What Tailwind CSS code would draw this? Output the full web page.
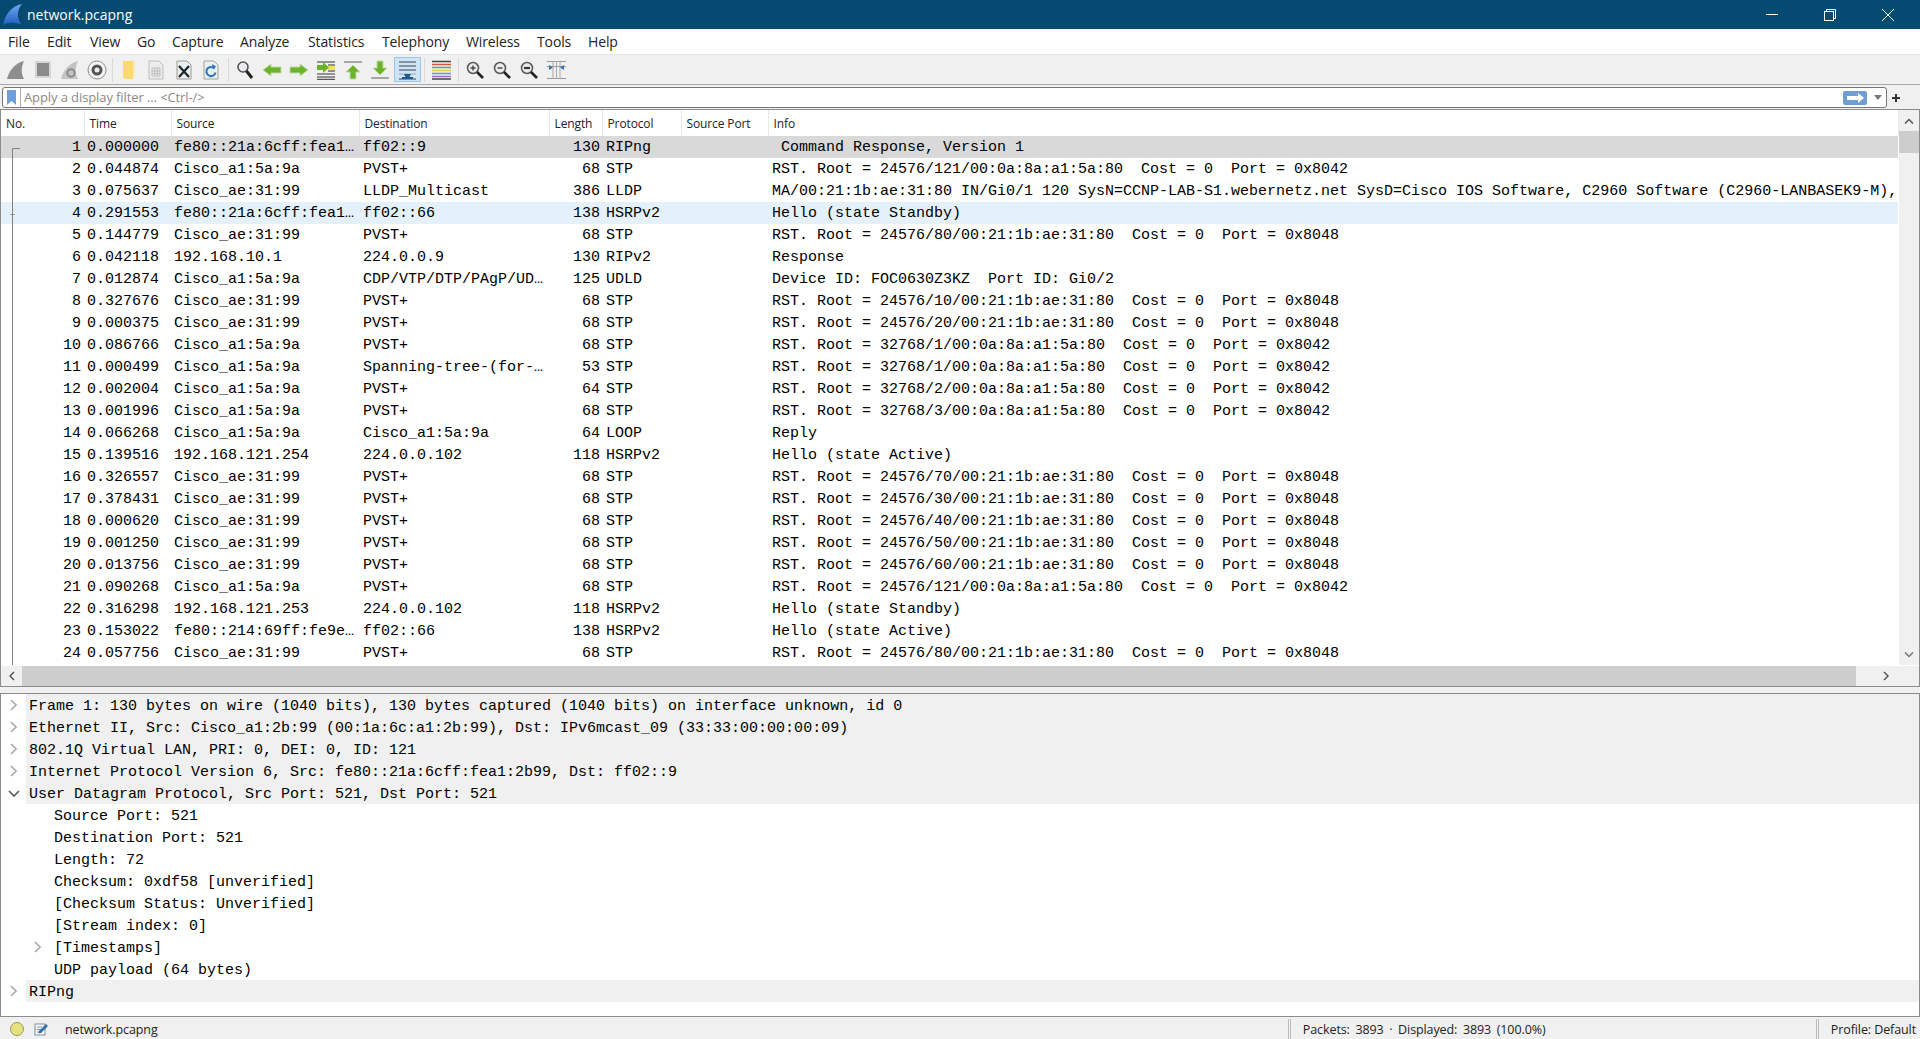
<!DOCTYPE html>
<html>
<head>
<meta charset="utf-8">
<script src="https://cdn.jsdelivr.net/npm/@tailwindcss/browser@4"></script>
<title>network.pcapng</title>
</head>
<body class="w-[1920px] h-[1039px] overflow-hidden flex flex-col bg-white text-[#1a1a1a] font-['Open_Sans','Noto_Sans',sans-serif]">

<!-- title bar -->
<div class="h-[29px] shrink-0 bg-[#054a70] flex items-center text-white">
  <svg class="ml-[2px] w-[21px] h-[23px]" viewBox="0 0 21 23"><defs><linearGradient id="fin" x1="0" y1="0" x2="0" y2="1"><stop offset="0" stop-color="#6fa8ee"/><stop offset="1" stop-color="#1f5fc0"/></linearGradient></defs><path d="M1 22C3 12 9 3 20 1C15 7 14 15 20 22C13 19 7 19 1 22Z" fill="url(#fin)"/></svg>
  <span class="ml-[4px] text-[14px] leading-none">network.pcapng</span>
  <div class="ml-auto flex items-center h-full">
    <svg class="w-[14px] h-[14px] mr-[44px]" viewBox="0 0 14 14"><path d="M1 6.500H13" stroke="#fff" stroke-width="1"/></svg>
    <svg class="w-[14px] h-[14px] mr-[44px]" viewBox="0 0 14 14" fill="none" stroke="#fff"><rect x="1.500" y="3.500" width="9" height="9"/><path d="M3.500 3.500V1.500H12.500V10.500H10.500"/></svg>
    <svg class="w-[14px] h-[14px] mr-[25px]" viewBox="0 0 14 14" fill="none" stroke="#fff"><path d="M1 1L13 13M13 1L1 13"/></svg>
  </div>
</div>

<!-- menu -->
<div class="h-[26px] shrink-0 bg-white border-b border-[#e6e6e6] flex items-center text-[14px] tracking-[-0.12px] text-[#222] pl-[8px]">
  <span class="w-[39px]">File</span><span class="w-[43px]">Edit</span><span class="w-[47px]">View</span><span class="w-[35px]">Go</span><span class="w-[68px]">Capture</span><span class="w-[68px]">Analyze</span><span class="w-[74px]">Statistics</span><span class="w-[84px]">Telephony</span><span class="w-[71px]">Wireless</span><span class="w-[51px]">Tools</span><span>Help</span>
</div>

<!-- toolbar -->
<div class="h-[30px] shrink-0 bg-[#f0f0f0] border-b border-[#a9a9a9] flex items-center pl-[2px]">
  <span class="w-[27px] h-[24px] flex items-center justify-center"><svg class="w-[20px] h-[20px]" viewBox="0 0 20 20"><path d="M1 19C3 11 9 3 18 1C15 7 15 14 18 19Z" fill="#8e8e8e"/></svg></span>
  <span class="w-[27px] h-[24px] flex items-center justify-center"><svg class="w-[20px] h-[20px]" viewBox="0 0 20 20"><rect x="2" y="1" width="16" height="17" fill="#d5d5d5"/><rect x="4" y="3" width="12" height="13" fill="#8a8a8a"/></svg></span>
  <span class="w-[27px] h-[24px] flex items-center justify-center"><svg class="w-[20px] h-[20px]" viewBox="0 0 20 20"><path d="M1 19C3 11 9 3 18 1C15 7 15 14 18 19Z" fill="#c4c4c4"/><circle cx="11" cy="13" r="3.700" fill="none" stroke="#8a8a8a" stroke-width="2"/></svg></span>
  <span class="w-[27px] h-[24px] flex items-center justify-center"><svg class="w-[20px] h-[20px]" viewBox="0 0 20 20"><circle cx="10" cy="10" r="9" fill="#f4f4f4" stroke="#8f8f8f"/><circle cx="10" cy="10" r="5.500" fill="#555"/><circle cx="10" cy="10" r="2.500" fill="#eee"/></svg></span>
  <span class="w-[5px] h-[24px] flex justify-center"><span class="w-px h-full bg-[#d8d8d8]"></span></span>
  <span class="w-[27.5px] h-[24px] flex items-center justify-center"><svg class="w-[14px] h-[20px]" viewBox="0 0 14 20"><path d="M1 1H11V19H5L1 18Z" fill="#fcd96c"/><path d="M11 1H13V17H11Z" fill="#f3e8bf"/></svg></span>
  <span class="w-[27.5px] h-[24px] flex items-center justify-center"><svg class="w-[18px] h-[20px]" viewBox="0 0 18 20"><path d="M2 1H12L16 5V19H2Z" fill="#ececec" stroke="#bdbdb5"/><path d="M5 8H13V16H5ZM5 11H13M5 13.500H13M8 8V16M10.500 8V16" fill="none" stroke="#bdbdbd"/></svg></span>
  <span class="w-[27.5px] h-[24px] flex items-center justify-center"><svg class="w-[18px] h-[20px]" viewBox="0 0 18 20"><path d="M2 1H12L16 5V19H2Z" fill="#e6f0f8" stroke="#a39c88"/><path d="M4 6L14 17M14 6L4 17" stroke="#222" stroke-width="2.200"/></svg></span>
  <span class="w-[27.5px] h-[24px] flex items-center justify-center"><svg class="w-[18px] h-[20px]" viewBox="0 0 18 20"><path d="M2 1H12L16 5V19H2Z" fill="#e6f0f8" stroke="#a8a290"/><path d="M12.500 8.500A4.600 4.600 0 1 0 13.500 12.500" fill="none" stroke="#2f74b8" stroke-width="2"/><path d="M10 4L14 6.500L11 9.500Z" fill="#2f74b8"/></svg></span>
  <span class="w-[6.5px] h-[24px] flex justify-center"><span class="w-px h-full bg-[#d8d8d8]"></span></span>
  <span class="w-[27px] h-[24px] flex items-center justify-center"><svg class="w-[18px] h-[20px]" viewBox="0 0 18 20"><circle cx="7" cy="7" r="5" fill="#e8eef2" stroke="#555" stroke-width="1.600"/><path d="M10.500 11L16 18" stroke="#222" stroke-width="3"/></svg></span>
  <span class="w-[27px] h-[24px] flex items-center justify-center"><svg class="w-[20px] h-[14px]" viewBox="0 0 20 14"><path d="M1 7L9 1V4H19V10H9V13Z" fill="#6cb32c" stroke="#bcdca0"/></svg></span>
  <span class="w-[27px] h-[24px] flex items-center justify-center"><svg class="w-[20px] h-[14px]" viewBox="0 0 20 14"><path d="M19 7L11 1V4H1V10H11V13Z" fill="#6cb32c" stroke="#bcdca0"/></svg></span>
  <span class="w-[27px] h-[24px] flex items-center justify-center"><svg class="w-[20px] h-[20px]" viewBox="0 0 20 20"><path d="M1 2H19M1 17H19M1 19.300H19M12 5H19M12 8H19M12 11H19M1 14H19" stroke="#333" stroke-width="1"/><rect x="12" y="6" width="7" height="4" fill="#f0e25c"/><path d="M1 5H7V2L13 7.500L7 13V10H1Z" fill="#6cb32c"/></svg></span>
  <span class="w-[27px] h-[24px] flex items-center justify-center"><svg class="w-[20px] h-[20px]" viewBox="0 0 20 20"><rect x="1" y="1" width="18" height="2" fill="#a8a8a8"/><path d="M10 5L17 12H13V19H7V12H3Z" fill="#6cb32c" stroke="#bcdca0"/></svg></span>
  <span class="w-[27px] h-[24px] flex items-center justify-center"><svg class="w-[20px] h-[20px]" viewBox="0 0 20 20"><rect x="1" y="17" width="18" height="2" fill="#a8a8a8"/><path d="M10 15L17 8H13V1H7V8H3Z" fill="#6cb32c" stroke="#bcdca0"/></svg></span>
  <span class="w-[27px] h-[25px] bg-[#cde4f7] border border-[#9bc6ea] flex items-center justify-center"><svg class="w-[19px] h-[20px]" viewBox="0 0 19 20"><path d="M1 2H18M1 6H18M1 10H18" stroke="#444" stroke-width="1"/><path d="M1 14H18" stroke="#aaa"/><path d="M1 19H18" stroke="#444"/><path d="M6 14H13L11.500 17H7.500Z" fill="#1f5c96"/><rect x="4" y="17" width="11" height="2" fill="#1f5c96"/></svg></span>
  <span class="w-[7px] h-[24px] flex justify-center"><span class="w-px h-full bg-[#d8d8d8]"></span></span>
  <span class="w-[27px] h-[24px] flex items-center justify-center"><svg class="w-[19px] h-[20px]" viewBox="0 0 19 20" stroke-width="1.500"><path d="M0 1.500H19" stroke="#444"/><path d="M0 4.500H19" stroke="#d9534f"/><path d="M0 7.500H19" stroke="#6aa84f"/><path d="M0 10.500H19" stroke="#e6c84f"/><path d="M0 13.500H19" stroke="#6d8fd6"/><path d="M0 16.500H19" stroke="#a56bbf"/><path d="M0 19H19" stroke="#444"/></svg></span>
  <span class="w-[7px] h-[24px] flex justify-center"><span class="w-px h-full bg-[#d8d8d8]"></span></span>
  <span class="w-[27px] h-[24px] flex items-center justify-center"><svg class="w-[18px] h-[18px]" viewBox="0 0 18 18"><circle cx="7" cy="7" r="5.500" fill="#ececec" stroke="#555" stroke-width="1.500"/><path d="M4.500 7H9.500M7 4.500V9.500" stroke="#444" stroke-width="1.400"/><path d="M11 11L17 17" stroke="#222" stroke-width="2.600"/></svg></span>
  <span class="w-[27px] h-[24px] flex items-center justify-center"><svg class="w-[18px] h-[18px]" viewBox="0 0 18 18"><circle cx="7" cy="7" r="5.500" fill="#ececec" stroke="#555" stroke-width="1.500"/><path d="M4.500 7H9.500" stroke="#444" stroke-width="1.400"/><path d="M11 11L17 17" stroke="#222" stroke-width="2.600"/></svg></span>
  <span class="w-[27px] h-[24px] flex items-center justify-center"><svg class="w-[18px] h-[18px]" viewBox="0 0 18 18"><circle cx="7" cy="7" r="5.500" fill="#ececec" stroke="#555" stroke-width="1.500"/><path d="M4 7H10" stroke="#333" stroke-width="2.200"/><path d="M11 11L17 17" stroke="#222" stroke-width="2.600"/></svg></span>
  <span class="w-[27px] h-[24px] flex items-center justify-center"><svg class="w-[19px] h-[20px]" viewBox="0 0 19 20"><path d="M0 1.500H19M0 18.500H19M0 6.500H19" stroke="#999"/><path d="M6 1V19M13 1V19M9.500 1V19" stroke="#aaa"/><path d="M2 5L6 7.500L2 10ZM17 5L13 7.500L17 10Z" fill="#2f74b8"/></svg></span>
</div>

<!-- filter -->
<div class="h-[24px] shrink-0 bg-[#f0f0f0] flex items-start pt-[2px] pl-[2px]">
  <div class="w-[1885px] h-[21px] bg-white border border-[#777] rounded-[3px] flex items-center">
    <svg class="ml-[3px] w-[11px] h-[16px] shrink-0" viewBox="0 0 11 16"><path d="M1 0H10V15L5.500 11L1 15Z" fill="#6f9fd8"/></svg>
    <span class="ml-[3px] w-px h-full bg-[#aaa]"></span>
    <span class="ml-[3px] text-[13px] tracking-[-0.1px] text-[#8a8a8a]">Apply a display filter ... &lt;Ctrl-/&gt;</span>
    <span class="ml-auto w-[24px] h-[14px] bg-[#6f9fd2] rounded-[2px] flex items-center justify-center"><svg class="w-[17px] h-[10px]" viewBox="0 0 17 10"><path d="M0 3H11V0L17 5L11 10V7H0Z" fill="#fff"/></svg></span>
    <svg class="ml-[7px] mr-[4px] w-[8px] h-[5px]" viewBox="0 0 8 5"><path d="M0 0H8L4 5Z" fill="#777"/></svg>
  </div>
  <svg class="ml-[4px] mt-[6px] w-[10px] h-[10px]" viewBox="0 0 10 10"><path d="M5 1V9M1 5H9" stroke="#333" stroke-width="2"/></svg>
</div>

<!-- packet list -->
<div class="h-[578px] shrink-0 border border-[#8c8c8c] flex flex-col relative">
  <div class="flex h-[555px] shrink-0">
    <div class="w-[1898px] shrink-0 overflow-hidden relative">
      <table class="table-fixed w-[1897px] font-['Liberation_Mono',monospace] text-[15px] text-black [&_td]:pt-px [&_td]:pb-0 [&_td]:px-[3px] [&_td]:h-[22px] [&_td]:leading-[21px] [&_td]:whitespace-pre [&_td]:overflow-hidden [&_td:nth-child(1)]:text-right [&_td:nth-child(3)]:pl-[3px] [&_td:nth-child(4)]:pl-[4px] [&_td:nth-child(5)]:text-right [&_td:nth-child(5)]:pr-[2px] [&_td:nth-child(6)]:pl-[4px] [&_td:nth-child(8)]:pl-[4px]">
        <colgroup><col class="w-[83px]"><col class="w-[87px]"><col class="w-[188px]"><col class="w-[190px]"><col class="w-[53px]"><col class="w-[79px]"><col class="w-[87px]"><col class="w-[1130px]"></colgroup>
        <thead class="font-['Open_Sans',sans-serif] text-[12px] tracking-[-0.12px] text-[#222] [&_th]:h-[26px] [&_th]:font-normal [&_th]:text-left [&_th]:pl-[5px] [&_th]:pt-px [&_th]:border-r [&_th]:border-[#e8e8e8] [&_th]:whitespace-nowrap [&_th]:overflow-hidden">
          <tr><th>No.</th><th>Time</th><th>Source</th><th>Destination</th><th>Length</th><th>Protocol</th><th>Source Port</th><th class="border-r-0">Info</th></tr>
        </thead>
        <tbody>
          <tr class="bg-[#d9d9d9]"><td>1</td><td>0.000000</td><td>fe80::21a:6cff:fea1…</td><td>ff02::9</td><td>130</td><td>RIPng</td><td></td><td> Command Response, Version 1</td></tr>
          <tr><td>2</td><td>0.044874</td><td>Cisco_a1:5a:9a</td><td>PVST+</td><td>68</td><td>STP</td><td></td><td>RST. Root = 24576/121/00:0a:8a:a1:5a:80  Cost = 0  Port = 0x8042</td></tr>
          <tr><td>3</td><td>0.075637</td><td>Cisco_ae:31:99</td><td>LLDP_Multicast</td><td>386</td><td>LLDP</td><td></td><td>MA/00:21:1b:ae:31:80 IN/Gi0/1 120 SysN=CCNP-LAB-S1.webernetz.net SysD=Cisco IOS Software, C2960 Software (C2960-LANBASEK9-M),</td></tr>
          <tr class="bg-[#e4f1fb]"><td>4</td><td>0.291553</td><td>fe80::21a:6cff:fea1…</td><td>ff02::66</td><td>138</td><td>HSRPv2</td><td></td><td>Hello (state Standby)</td></tr>
          <tr><td>5</td><td>0.144779</td><td>Cisco_ae:31:99</td><td>PVST+</td><td>68</td><td>STP</td><td></td><td>RST. Root = 24576/80/00:21:1b:ae:31:80  Cost = 0  Port = 0x8048</td></tr>
          <tr><td>6</td><td>0.042118</td><td>192.168.10.1</td><td>224.0.0.9</td><td>130</td><td>RIPv2</td><td></td><td>Response</td></tr>
          <tr><td>7</td><td>0.012874</td><td>Cisco_a1:5a:9a</td><td>CDP/VTP/DTP/PAgP/UD…</td><td>125</td><td>UDLD</td><td></td><td>Device ID: FOC0630Z3KZ  Port ID: Gi0/2</td></tr>
          <tr><td>8</td><td>0.327676</td><td>Cisco_ae:31:99</td><td>PVST+</td><td>68</td><td>STP</td><td></td><td>RST. Root = 24576/10/00:21:1b:ae:31:80  Cost = 0  Port = 0x8048</td></tr>
          <tr><td>9</td><td>0.000375</td><td>Cisco_ae:31:99</td><td>PVST+</td><td>68</td><td>STP</td><td></td><td>RST. Root = 24576/20/00:21:1b:ae:31:80  Cost = 0  Port = 0x8048</td></tr>
          <tr><td>10</td><td>0.086766</td><td>Cisco_a1:5a:9a</td><td>PVST+</td><td>68</td><td>STP</td><td></td><td>RST. Root = 32768/1/00:0a:8a:a1:5a:80  Cost = 0  Port = 0x8042</td></tr>
          <tr><td>11</td><td>0.000499</td><td>Cisco_a1:5a:9a</td><td>Spanning-tree-(for-…</td><td>53</td><td>STP</td><td></td><td>RST. Root = 32768/1/00:0a:8a:a1:5a:80  Cost = 0  Port = 0x8042</td></tr>
          <tr><td>12</td><td>0.002004</td><td>Cisco_a1:5a:9a</td><td>PVST+</td><td>64</td><td>STP</td><td></td><td>RST. Root = 32768/2/00:0a:8a:a1:5a:80  Cost = 0  Port = 0x8042</td></tr>
          <tr><td>13</td><td>0.001996</td><td>Cisco_a1:5a:9a</td><td>PVST+</td><td>68</td><td>STP</td><td></td><td>RST. Root = 32768/3/00:0a:8a:a1:5a:80  Cost = 0  Port = 0x8042</td></tr>
          <tr><td>14</td><td>0.066268</td><td>Cisco_a1:5a:9a</td><td>Cisco_a1:5a:9a</td><td>64</td><td>LOOP</td><td></td><td>Reply</td></tr>
          <tr><td>15</td><td>0.139516</td><td>192.168.121.254</td><td>224.0.0.102</td><td>118</td><td>HSRPv2</td><td></td><td>Hello (state Active)</td></tr>
          <tr><td>16</td><td>0.326557</td><td>Cisco_ae:31:99</td><td>PVST+</td><td>68</td><td>STP</td><td></td><td>RST. Root = 24576/70/00:21:1b:ae:31:80  Cost = 0  Port = 0x8048</td></tr>
          <tr><td>17</td><td>0.378431</td><td>Cisco_ae:31:99</td><td>PVST+</td><td>68</td><td>STP</td><td></td><td>RST. Root = 24576/30/00:21:1b:ae:31:80  Cost = 0  Port = 0x8048</td></tr>
          <tr><td>18</td><td>0.000620</td><td>Cisco_ae:31:99</td><td>PVST+</td><td>68</td><td>STP</td><td></td><td>RST. Root = 24576/40/00:21:1b:ae:31:80  Cost = 0  Port = 0x8048</td></tr>
          <tr><td>19</td><td>0.001250</td><td>Cisco_ae:31:99</td><td>PVST+</td><td>68</td><td>STP</td><td></td><td>RST. Root = 24576/50/00:21:1b:ae:31:80  Cost = 0  Port = 0x8048</td></tr>
          <tr><td>20</td><td>0.013756</td><td>Cisco_ae:31:99</td><td>PVST+</td><td>68</td><td>STP</td><td></td><td>RST. Root = 24576/60/00:21:1b:ae:31:80  Cost = 0  Port = 0x8048</td></tr>
          <tr><td>21</td><td>0.090268</td><td>Cisco_a1:5a:9a</td><td>PVST+</td><td>68</td><td>STP</td><td></td><td>RST. Root = 24576/121/00:0a:8a:a1:5a:80  Cost = 0  Port = 0x8042</td></tr>
          <tr><td>22</td><td>0.316298</td><td>192.168.121.253</td><td>224.0.0.102</td><td>118</td><td>HSRPv2</td><td></td><td>Hello (state Standby)</td></tr>
          <tr><td>23</td><td>0.153022</td><td>fe80::214:69ff:fe9e…</td><td>ff02::66</td><td>138</td><td>HSRPv2</td><td></td><td>Hello (state Active)</td></tr>
          <tr><td>24</td><td>0.057756</td><td>Cisco_ae:31:99</td><td>PVST+</td><td>68</td><td>STP</td><td></td><td>RST. Root = 24576/80/00:21:1b:ae:31:80  Cost = 0  Port = 0x8048</td></tr>
        </tbody>
      </table>
      <!-- related-packet tree line, over the first column -->
      <svg class="absolute left-[9px] top-[36px] w-[12px] h-[520px]" viewBox="0 0 12 520" fill="none" stroke="#808080"><path d="M10 2.500H2.500V520"/><path d="M0 68.500H5" stroke="#999" stroke-dasharray="2 1"/></svg>
    </div>
    <!-- vertical scrollbar -->
    <div class="w-[20px] shrink-0 bg-[#f0f0f0] flex flex-col">
      <div class="h-[21px] flex items-center justify-center"><svg class="w-[10px] h-[6px]" viewBox="0 0 10 6" fill="none" stroke="#555" stroke-width="1.500"><path d="M1 5.500L5 1.500L9 5.500"/></svg></div>
      <div class="h-[22px] bg-[#cdcdcd]"></div>
      <div class="flex-1"></div>
      <div class="h-[21px] flex items-center justify-center"><svg class="w-[10px] h-[6px]" viewBox="0 0 10 6" fill="none" stroke="#777" stroke-width="1.500"><path d="M1 .5L5 4.500L9 .5"/></svg></div>
    </div>
  </div>
  <!-- horizontal scrollbar -->
  <div class="h-[20px] mt-[1px] shrink-0 bg-[#f0f0f0] flex">
    <div class="w-[21px] flex items-center justify-center"><svg class="w-[6px] h-[10px]" viewBox="0 0 6 10" fill="none" stroke="#555" stroke-width="1.500"><path d="M5 1L1 5L5 9"/></svg></div>
    <div class="w-[1834px] bg-[#cdcdcd]"></div>
    <div class="w-[60px] flex items-center justify-center"><svg class="w-[6px] h-[10px]" viewBox="0 0 6 10" fill="none" stroke="#555" stroke-width="1.500"><path d="M1 1L5 5L1 9"/></svg></div>
  </div>
</div>

<div class="h-[6px] shrink-0 bg-[#f0f0f0]"></div>

<!-- packet details -->
<div class="h-[324px] shrink-0 border border-[#8c8c8c] font-['Liberation_Mono',monospace] text-[15px] leading-[21px] text-black [&>div]:whitespace-pre [&>div]:h-[22px]">
  <div class="flex"><span class="w-[25px] flex items-center justify-center"><svg class="w-[7px] h-[12px]" viewBox="0 0 7 12" fill="none" stroke="#aaa" stroke-width="1.600"><path d="M1 1L6 6L1 11"/></svg></span><span class="flex-1 bg-[#f0f0f0] pl-[3px] pt-[2px]">Frame 1: 130 bytes on wire (1040 bits), 130 bytes captured (1040 bits) on interface unknown, id 0</span></div>
  <div class="flex"><span class="w-[25px] flex items-center justify-center"><svg class="w-[7px] h-[12px]" viewBox="0 0 7 12" fill="none" stroke="#aaa" stroke-width="1.600"><path d="M1 1L6 6L1 11"/></svg></span><span class="flex-1 bg-[#f0f0f0] pl-[3px] pt-[2px]">Ethernet II, Src: Cisco_a1:2b:99 (00:1a:6c:a1:2b:99), Dst: IPv6mcast_09 (33:33:00:00:00:09)</span></div>
  <div class="flex"><span class="w-[25px] flex items-center justify-center"><svg class="w-[7px] h-[12px]" viewBox="0 0 7 12" fill="none" stroke="#aaa" stroke-width="1.600"><path d="M1 1L6 6L1 11"/></svg></span><span class="flex-1 bg-[#f0f0f0] pl-[3px] pt-[2px]">802.1Q Virtual LAN, PRI: 0, DEI: 0, ID: 121</span></div>
  <div class="flex"><span class="w-[25px] flex items-center justify-center"><svg class="w-[7px] h-[12px]" viewBox="0 0 7 12" fill="none" stroke="#aaa" stroke-width="1.600"><path d="M1 1L6 6L1 11"/></svg></span><span class="flex-1 bg-[#f0f0f0] pl-[3px] pt-[2px]">Internet Protocol Version 6, Src: fe80::21a:6cff:fea1:2b99, Dst: ff02::9</span></div>
  <div class="flex"><span class="w-[25px] flex items-center justify-center"><svg class="w-[12px] h-[7px]" viewBox="0 0 12 7" fill="none" stroke="#555" stroke-width="1.600"><path d="M1 1L6 6L11 1"/></svg></span><span class="flex-1 bg-[#f0f0f0] pl-[3px] pt-[2px]">User Datagram Protocol, Src Port: 521, Dst Port: 521</span></div>
  <div class="pl-[53px] pt-[2px]">Source Port: 521</div>
  <div class="pl-[53px] pt-[2px]">Destination Port: 521</div>
  <div class="pl-[53px] pt-[2px]">Length: 72</div>
  <div class="pl-[53px] pt-[2px]">Checksum: 0xdf58 [unverified]</div>
  <div class="pl-[53px] pt-[2px]">[Checksum Status: Unverified]</div>
  <div class="pl-[53px] pt-[2px]">[Stream index: 0]</div>
  <div class="flex"><span class="w-[53px] pl-[33px] flex items-center"><svg class="w-[7px] h-[12px]" viewBox="0 0 7 12" fill="none" stroke="#aaa" stroke-width="1.600"><path d="M1 1L6 6L1 11"/></svg></span><span class="pt-[2px]">[Timestamps]</span></div>
  <div class="pl-[53px] pt-[2px]">UDP payload (64 bytes)</div>
  <div class="flex"><span class="w-[25px] flex items-center justify-center"><svg class="w-[7px] h-[12px]" viewBox="0 0 7 12" fill="none" stroke="#aaa" stroke-width="1.600"><path d="M1 1L6 6L1 11"/></svg></span><span class="flex-1 bg-[#f0f0f0] pl-[3px] pt-[2px]">RIPng</span></div>
</div>

<!-- status bar -->
<div class="flex-1 bg-[#f0f0f0] flex items-center text-[12.5px] tracking-[-0.1px] text-[#222] pt-px">
  <span class="ml-[10px] w-[14px] h-[14px] rounded-full bg-[#e3e27e] border border-[#9a9a5a]"></span>
  <svg class="ml-[10px] w-[14px] h-[14px]" viewBox="0 0 14 14"><rect x="1" y="2" width="10" height="11" fill="#fff" stroke="#7a8a9a"/><path d="M3 5H8M3 7.500H7M3 10H8" stroke="#7a8a9a"/><path d="M5 9L12 2L14 4L7 11L4.500 11.500Z" fill="#2f6fa8"/></svg>
  <span class="ml-[17px] pt-[3px]">network.pcapng</span>
  <span class="ml-auto w-[3px] h-[20px] border-x border-[#bdbdbd]"></span>
  <span class="ml-[12px] w-[513px] pt-[3px] [word-spacing:2.5px]">Packets: 3893 · Displayed: 3893 (100.0%)</span>
  <span class="w-[3px] h-[20px] border-x border-[#bdbdbd]"></span>
  <span class="ml-[12px] mr-[4px] pt-[3px]">Profile: Default</span>
</div>
</body>
</html>
